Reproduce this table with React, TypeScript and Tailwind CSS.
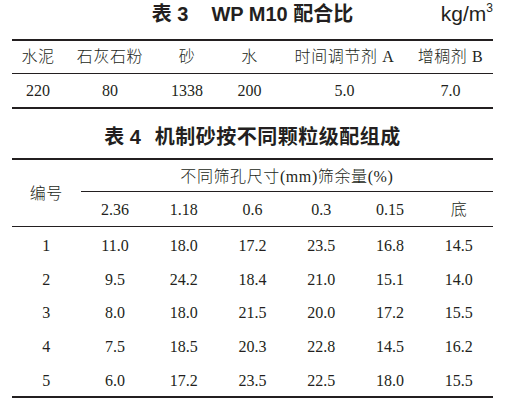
import React from "react";

const serif = "font-['Liberation_Serif','Noto_Sans_CJK_SC',serif]";
const sans = "font-['Liberation_Sans','Noto_Sans_CJK_SC',sans-serif]";

const mixHead = ["水泥", "石灰石粉", "砂", "水", "时间调节剂 A", "增稠剂 B"];
const mixData = ["220", "80", "1338", "200", "5.0", "7.0"];

const sieves = ["2.36", "1.18", "0.6", "0.3", "0.15", "底"];
const grading = [
  ["1", "11.0", "18.0", "17.2", "23.5", "16.8", "14.5"],
  ["2", "9.5", "24.2", "18.4", "21.0", "15.1", "14.0"],
  ["3", "8.0", "18.0", "21.5", "20.0", "17.2", "15.5"],
  ["4", "7.5", "18.5", "20.3", "22.8", "14.5", "16.2"],
  ["5", "6.0", "17.2", "23.5", "22.5", "18.0", "15.5"],
];

const App = () => {
  return (
    <div className="w-[506px] h-[407px] bg-white text-[#231f20] pl-[12px] pr-[13px]">
      {/* 表3 title row */}
      <div className={`grid grid-cols-[1fr_auto_1fr] items-start h-[39px] ${sans}`}>
        <div></div>
        <div className="text-[20px] leading-[28px] font-semibold whitespace-nowrap">
          表 3<span className="ml-[23px]">WP M10 配合比</span>
        </div>
        <div className="text-[21px] leading-[28px] justify-self-end whitespace-nowrap">
          kg/m<sup className="text-[12px] relative -top-[9px]">3</sup>
        </div>
      </div>

      {/* 表3 */}
      <div className={`border-y-2 border-[#231f20] text-[16px] leading-[20px] font-light ${serif}`}>
        <div className="grid grid-cols-[52px_92px_62px_63px_127px_85px] h-[33px] border-b border-[#231f20]">
          {mixHead.map((h) => (
            <div key={h} className="flex items-center justify-center tracking-[0.6px] whitespace-nowrap">
              {h}
            </div>
          ))}
        </div>
        <div className="grid grid-cols-[52px_92px_62px_63px_127px_85px] h-[33px]">
          {mixData.map((d, i) => (
            <div key={i} className="flex items-center justify-center">
              {d}
            </div>
          ))}
        </div>
      </div>

      {/* 表4 title */}
      <div className={`flex justify-center pt-[14px] pb-[7px] ${sans}`}>
        <div className="text-[20px] leading-[28px] font-semibold whitespace-nowrap">
          表 4<span className="ml-[14px] tracking-[0.5px]">机制砂按不同颗粒级配组成</span>
        </div>
      </div>

      {/* 表4 */}
      <div className={`border-y-2 border-[#231f20] text-[16px] leading-[20px] font-light ${serif}`}>
        <div className="grid grid-cols-7 border-b border-[#231f20]">
          <div className="row-span-2 flex items-center justify-center tracking-[0.6px] pt-[1px]">
            编号
          </div>
          <div className="col-span-6 h-[32px] flex items-center justify-center tracking-[0.6px] border-b border-[#231f20] pt-[3px]">
            不同筛孔尺寸(mm)筛余量(%)
          </div>
          {sieves.map((s) => (
            <div key={s} className="h-[34px] flex items-center justify-center pt-[2px]">
              {s}
            </div>
          ))}
        </div>
        {grading.map((row) => (
          <div key={row[0]} className="grid grid-cols-7 h-[33.8px]">
            {row.map((v, i) => (
              <div key={i} className="flex items-center justify-center pt-[4px]">
                {v}
              </div>
            ))}
          </div>
        ))}
      </div>
    </div>
  );
};

export default App;
